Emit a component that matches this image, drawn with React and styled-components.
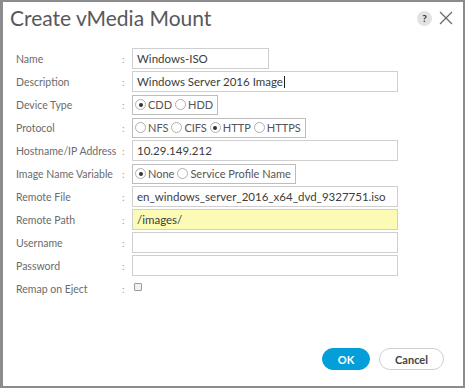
import React from 'react';
import styled, { createGlobalStyle } from 'styled-components';

const GlobalStyle = createGlobalStyle`
  html, body {
    margin: 0;
    padding: 0;
    background: #fff;
  }
  * {
    box-sizing: border-box;
  }
`;

const Dialog = styled.div`
  width: 465px;
  height: 388px;
  border: 2px solid #8c8c8c;
  border-left-width: 3px;
  background: #fff;
  font-family: Lato, 'Open Sans', sans-serif;
  display: flex;
  flex-direction: column;
`;

const Header = styled.div`
  display: flex;
  align-items: center;
  justify-content: space-between;
  padding: 0 10px 0 7px;
  height: 30px;
`;

const Title = styled.h1`
  margin: 0;
  font-size: 21px;
  font-weight: 400;
  color: #58585b;
`;

const HeaderActions = styled.div`
  display: flex;
  align-items: center;
  gap: 7px;
  padding-top: 2px;
`;

const HelpIcon = styled.span`
  width: 15px;
  height: 15px;
  border-radius: 50%;
  background: #e2e2e2;
  color: #333;
  font-size: 10px;
  font-weight: 700;
  display: flex;
  align-items: center;
  justify-content: center;
`;

const Form = styled.div`
  display: flex;
  flex-direction: column;
  padding: 16px 0 0 13px;
  gap: 2px;
`;

const Row = styled.div`
  display: grid;
  grid-template-columns: 106px 10px auto;
  align-items: center;
  height: 21px;
`;

const Label = styled.span`
  font-size: 10.5px;
  color: #6b6b6b;
`;

const Colon = styled.span`
  font-size: 10px;
  color: #999;
`;

const Input = styled.div`
  width: ${p => p.w || '266px'};
  height: 21px;
  border: 1px solid #cfcfcf;
  background: ${p => (p.highlight ? '#fbfbb6' : '#fff')};
  font-size: 11.5px;
  color: #3c3c3c;
  padding: 0 4px;
  display: flex;
  align-items: center;
  white-space: nowrap;
`;

const Caret = styled.span`
  display: inline-block;
  width: 1px;
  height: 12px;
  background: #222;
  margin-left: 1px;
`;

const RadioGroup = styled.div`
  display: inline-flex;
  align-items: center;
  height: 20px;
  border: 1px solid #bdbdbd;
  padding: 0 4px 0 2px;
  gap: 3px;
  width: max-content;
`;

const RadioItem = styled.label`
  display: inline-flex;
  align-items: center;
  gap: 2px;
  font-size: 11px;
  color: #555;
`;

const RadioCircle = styled.span`
  width: 11px;
  height: 11px;
  border-radius: 50%;
  border: 1px solid #b0b0b0;
  background: #fff;
  display: flex;
  align-items: center;
  justify-content: center;

  &::after {
    content: '';
    width: 4px;
    height: 4px;
    border-radius: 50%;
    background: ${p => (p.checked ? '#333' : 'transparent')};
  }
`;

const Checkbox = styled.span`
  width: 8px;
  height: 8px;
  border: 1px solid #9a9a9a;
  border-radius: 1px;
  background: #f1f1f1;
  margin: 0 0 4px 2px;
`;

const Footer = styled.div`
  margin-top: auto;
  display: flex;
  justify-content: flex-end;
  gap: 9px;
  padding: 0 19px 16px 0;
`;

const Button = styled.button`
  height: 22px;
  border-radius: 11px;
  font-family: inherit;
  font-size: 11px;
  font-weight: 700;
  padding: 0;
  width: ${p => (p.primary ? '48px' : '65px')};
  background: ${p => (p.primary ? '#049fd9' : '#fff')};
  color: ${p => (p.primary ? '#fff' : '#444')};
  border: 1px solid ${p => (p.primary ? '#049fd9' : '#cfcfcf')};
`;

const Radios = ({ options, value }) => (
  <RadioGroup>
    {options.map(o => (
      <RadioItem key={o}>
        <RadioCircle checked={o === value} />
        {o}
      </RadioItem>
    ))}
  </RadioGroup>
);

const Field = ({ label, children }) => (
  <Row>
    <Label>{label}</Label>
    <Colon>:</Colon>
    {children}
  </Row>
);

export default function App() {
  return (
    <>
      <GlobalStyle />
      <Dialog>
        <Header>
          <Title>Create vMedia Mount</Title>
          <HeaderActions>
            <HelpIcon>?</HelpIcon>
            <svg width="14" height="14" viewBox="0 0 14 14">
              <path d="M1 1 L13 13 M13 1 L1 13" stroke="#666" strokeWidth="1.2" fill="none" />
            </svg>
          </HeaderActions>
        </Header>
        <Form>
          <Field label="Name">
            <Input w="137px">Windows-ISO</Input>
          </Field>
          <Field label="Description">
            <Input>
              Windows Server 2016 Image
              <Caret />
            </Input>
          </Field>
          <Field label="Device Type">
            <Radios options={['CDD', 'HDD']} value="CDD" />
          </Field>
          <Field label="Protocol">
            <Radios options={['NFS', 'CIFS', 'HTTP', 'HTTPS']} value="HTTP" />
          </Field>
          <Field label="Hostname/IP Address">
            <Input>10.29.149.212</Input>
          </Field>
          <Field label="Image Name Variable">
            <Radios options={['None', 'Service Profile Name']} value="None" />
          </Field>
          <Field label="Remote File">
            <Input>en_windows_server_2016_x64_dvd_9327751.iso</Input>
          </Field>
          <Field label="Remote Path">
            <Input highlight>/images/</Input>
          </Field>
          <Field label="Username">
            <Input />
          </Field>
          <Field label="Password">
            <Input />
          </Field>
          <Field label="Remap on Eject">
            <Checkbox />
          </Field>
        </Form>
        <Footer>
          <Button primary>OK</Button>
          <Button>Cancel</Button>
        </Footer>
      </Dialog>
    </>
  );
}
